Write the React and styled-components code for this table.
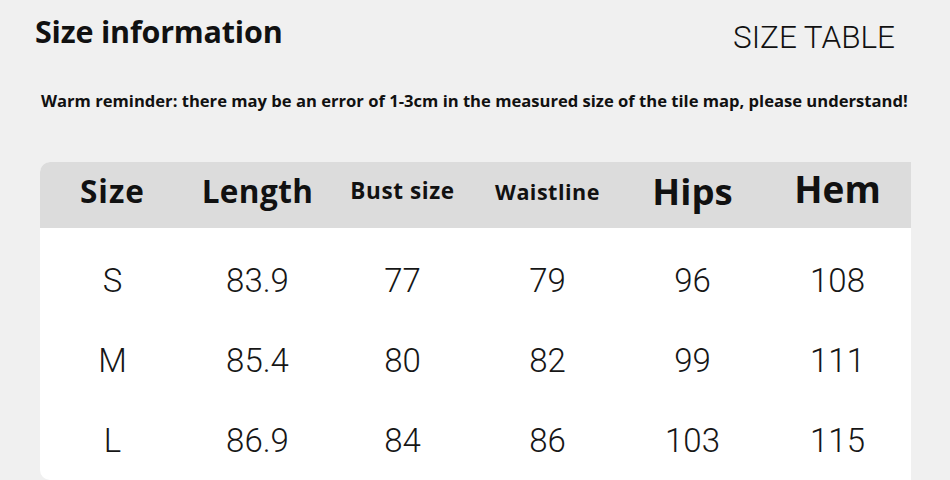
import React from 'react';
import styled, { createGlobalStyle } from 'styled-components';

const GlobalStyle = createGlobalStyle`
  html, body {
    margin: 0;
    padding: 0;
    background: #f0f0f0;
  }
`;

const Page = styled.div`
  width: 950px;
  height: 480px;
  overflow: hidden;
  background: #f0f0f0;
  font-family: 'Open Sans', 'Noto Sans', sans-serif;
  color: #111;
`;

const TopBar = styled.div`
  display: flex;
  justify-content: space-between;
  align-items: flex-start;
  padding: 10px 55px 0 35px;
  height: 78px;
  box-sizing: border-box;
`;

const Title = styled.h1`
  margin: 0;
  font-size: 30.5px;
  font-weight: 700;
  line-height: 42px;
  letter-spacing: -0.2px;
`;

const SubTitle = styled.div`
  margin-top: 10px;
  font-family: 'Roboto', 'Liberation Sans', sans-serif;
  font-size: 31.5px;
  line-height: 36px;
  font-weight: 300;
  color: #111;
`;

const Reminder = styled.p`
  margin: 0;
  padding-left: 41px;
  font-size: 16.6px;
  font-weight: 700;
  line-height: 46px;
  white-space: nowrap;
`;

const Table = styled.div`
  margin: 38px 0 0 40px;
  width: 871px;
  background: #fff;
  border-radius: 10px 0 0 10px;
  overflow: hidden;
`;

const Row = styled.div`
  display: grid;
  grid-template-columns: repeat(6, 145px);
  align-items: center;
  height: ${p => (p.$head ? '66px' : '80px')};
  background: ${p => (p.$head ? '#dcdcdc' : 'transparent')};
`;

const Body = styled.div`
  padding-top: 12px;
`;

const HeadCell = styled.div`
  text-align: center;
  font-size: ${p => p.$size}px;
  letter-spacing: ${p => p.$track || 0}px;
  font-weight: 700;
  line-height: 66px;
  white-space: nowrap;
  transform: translateY(${p => p.$shift || 0}px);
`;

const Cell = styled.div`
  text-align: center;
  font-family: 'Roboto', 'Liberation Sans', sans-serif;
  font-size: 33px;
  font-weight: 300;
  color: #161616;
`;

const headers = [
  { label: 'Size', size: 31.5, track: 1, shift: -4 },
  { label: 'Length', size: 31.5, track: 0.4, shift: -4 },
  { label: 'Bust size', size: 22.5, track: 0.6, shift: -4 },
  { label: 'Waistline', size: 21.5, track: 0.5, shift: -3 },
  { label: 'Hips', size: 36.5, track: 0, shift: -4 },
  { label: 'Hem', size: 37, track: 0, shift: -6 },
];

const rows = [
  ['S', '83.9', '77', '79', '96', '108'],
  ['M', '85.4', '80', '82', '99', '111'],
  ['L', '86.9', '84', '86', '103', '115'],
];

const App = () => (
  <>
    <GlobalStyle />
    <Page>
      <TopBar>
        <Title>Size information</Title>
        <SubTitle>SIZE TABLE</SubTitle>
      </TopBar>
      <Reminder>
        Warm reminder: there may be an error of 1-3cm in the measured size of the tile map, please understand!
      </Reminder>
      <Table>
        <Row $head>
          {headers.map(h => (
            <HeadCell key={h.label} $size={h.size} $track={h.track} $shift={h.shift}>
              {h.label}
            </HeadCell>
          ))}
        </Row>
        <Body>
          {rows.map(r => (
            <Row key={r[0]}>
              {r.map((v, i) => <Cell key={i}>{v}</Cell>)}
            </Row>
          ))}
        </Body>
      </Table>
    </Page>
  </>
);

export default App;
